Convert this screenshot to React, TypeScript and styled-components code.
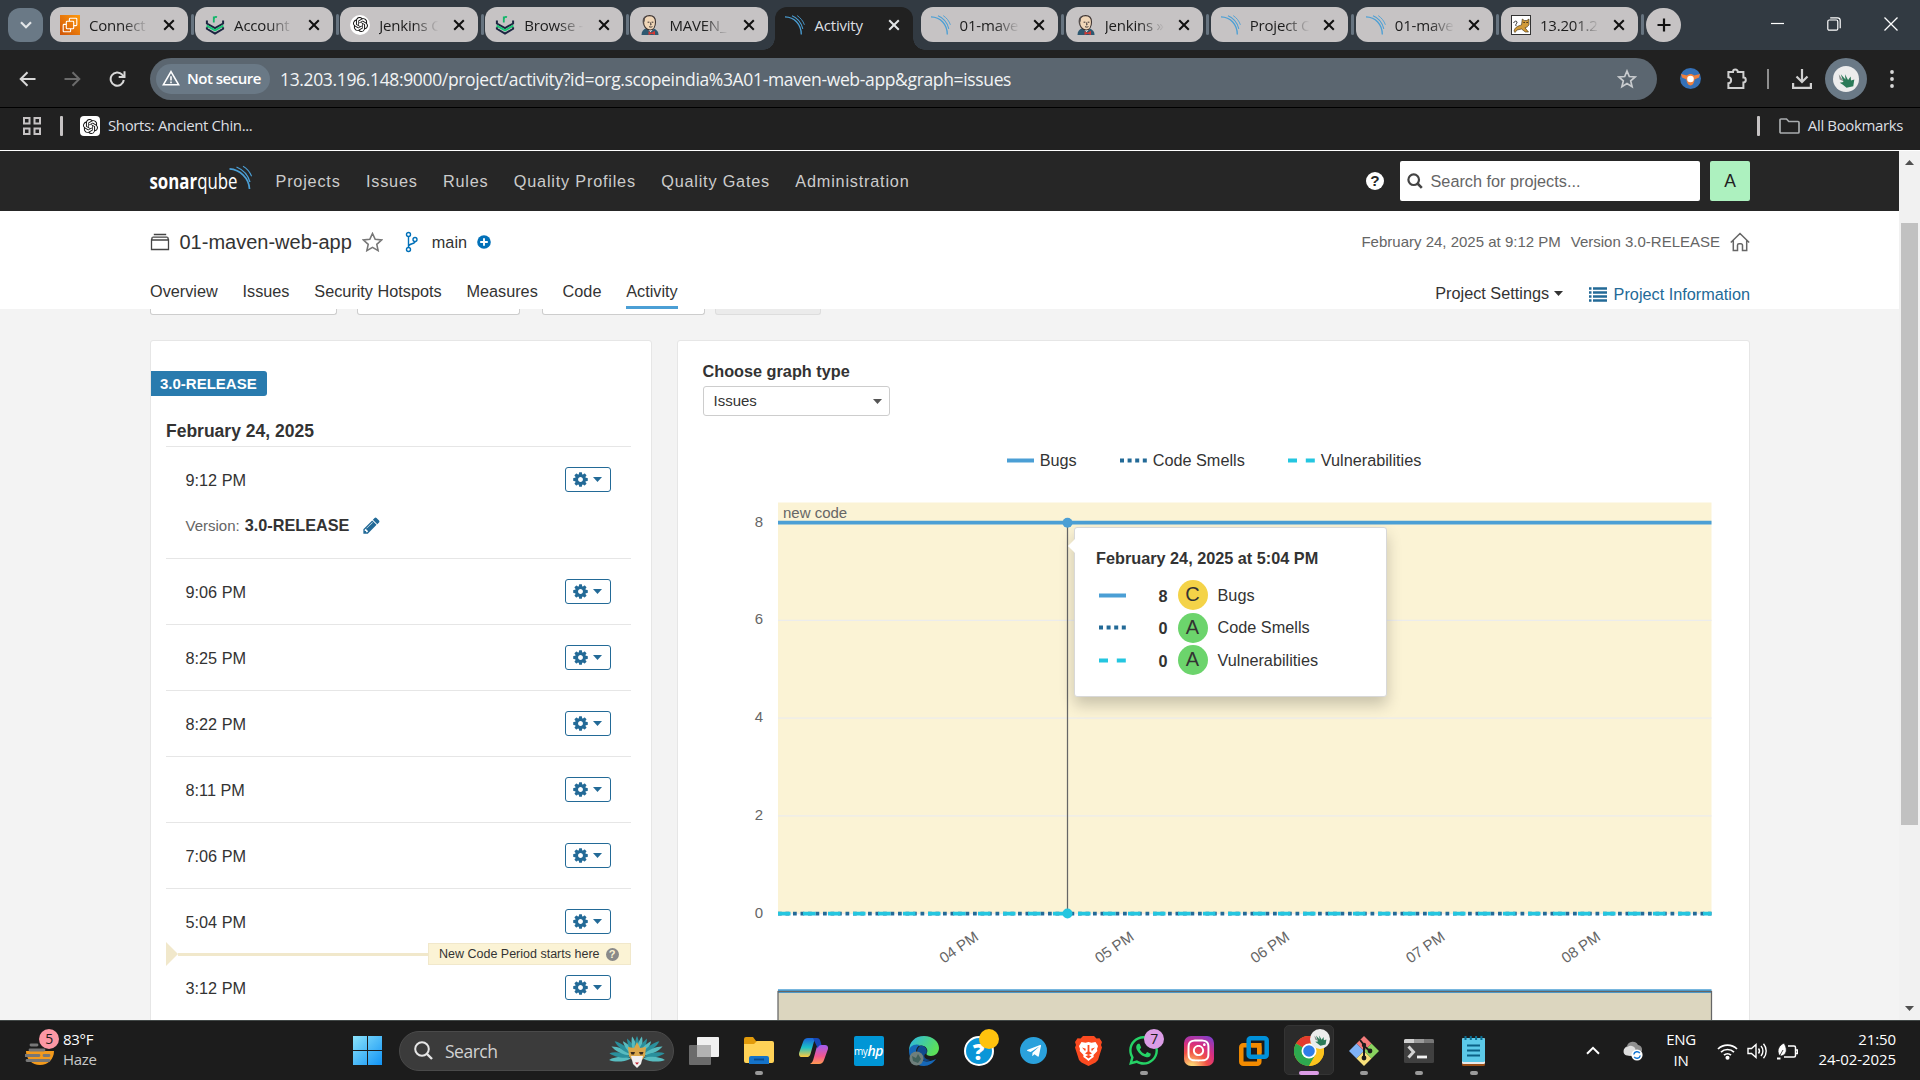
import React from "react";
import styled, { createGlobalStyle, css } from "styled-components";
import { SiOpenai } from "react-icons/si";
import { FaWhatsapp, FaTelegramPlane, FaInstagram } from "react-icons/fa";

const SANS = `"Liberation Sans", Arial, sans-serif`;
const SHELL = `"Open Sans", "Noto Sans", sans-serif`;

const Global = createGlobalStyle`
  html, body { margin: 0; padding: 0; background: #212121; overflow: hidden; }
  * { box-sizing: border-box; }
  svg { display: block; flex: none; }
`;

const Screen = styled.div`
  width: 1920px;
  height: 1080px;
  display: flex;
  flex-direction: column;
  overflow: hidden;
  font-family: ${SANS};
  font-size: 16.25px;
  color: #333;
`;

/* ---------- browser tabs ---------- */

const TabStrip = styled.div`
  height: 50px;
  flex: none;
  background: #323a42;
  display: flex;
  align-items: flex-start;
  padding: 7px 0 0 8px;
  font-family: ${SHELL};
`;
const TabSearch = styled.div`
  width: 35px;
  height: 34px;
  margin: 1px 7px 0 0;
  border-radius: 12px;
  background: #6a7986;
  display: flex;
  align-items: center;
  justify-content: center;
`;
const Slot = styled.div`
  width: 145.1px;
  display: flex;
  flex: none;
`;
const TabBox = styled.div<{ $active?: boolean }>`
  width: 137.5px;
  height: 35px;
  flex: none;
  border-radius: 12px;
  background: #c6c3c4;
  color: #1c1c1c;
  display: flex;
  align-items: center;
  padding: 0 13px 0 10px;
  ${(p) =>
    p.$active &&
    css`
      height: 43px;
      padding-bottom: 8px;
      border-radius: 12px 12px 0 0;
      background: #212121;
      color: #dcdfe2;
      position: relative;
      &::before,
      &::after {
        content: "";
        position: absolute;
        bottom: 0;
        width: 12px;
        height: 12px;
      }
      &::before {
        left: -12px;
        background: radial-gradient(circle at 0 0, transparent 11.5px, #212121 12px);
      }
      &::after {
        right: -12px;
        background: radial-gradient(circle at 100% 0, transparent 11.5px, #212121 12px);
      }
    `}
`;
const TabTitle = styled.div<{ $fade: boolean }>`
  width: 62px;
  margin-left: 9px;
  font-size: 15px;
  line-height: 20px;
  letter-spacing: -0.2px;
  white-space: nowrap;
  ${(p) => p.$fade && css`mask-image: linear-gradient(90deg, #000 55%, transparent 96%);`}
`;
const TabGap = styled.div<{ $line: boolean }>`
  width: 3px;
  height: 21px;
  margin: 7px 0 0 3px;
  border-radius: 2px;
  background: ${(p) => (p.$line ? "#66737f" : "transparent")};
`;
const NewTab = styled.div`
  width: 35px;
  height: 34px;
  margin-top: 1px;
  border-radius: 17px;
  background: #c6c3c4;
  display: flex;
  align-items: center;
  justify-content: center;
`;
const WinButtons = styled.div`
  margin-left: auto;
  width: 149px;
  padding-right: 22px;
  padding-top: 10px;
  display: flex;
  justify-content: space-between;
  align-items: center;
`;
const Spacer = styled.div`
  flex: 1;
`;

const CloseX = ({ color }: { color: string }) => (
  <svg width="12" height="12" viewBox="0 0 12 12">
    <path d="M1.2 1.2l9.6 9.6M10.8 1.2l-9.6 9.6" stroke={color} strokeWidth="2" />
  </svg>
);

const Ec2 = () => (
  <svg width="20" height="20" viewBox="0 0 20 20">
    <defs>
      <linearGradient id="ec2" x1="0" y1="1" x2="1" y2="0">
        <stop offset="0" stopColor="#cf5409" />
        <stop offset="1" stopColor="#ff9a0d" />
      </linearGradient>
    </defs>
    <rect width="20" height="20" fill="url(#ec2)" />
    <g fill="none" stroke="#fff" strokeWidth="1.1">
      <path d="M6.300 9.400H4a.8.8 0 00-.8.8V16a.8.8 0 00.8.8h5.800a.8.8 0 00.8-.8v-2.300" />
      <rect x="6.3" y="6.3" width="7.4" height="7.4" rx=".8" />
      <path d="M9.400 6.300V4a.8.8 0 01.8-.8H16a.8.8 0 01.8.8v5.800a.8.8 0 01-.8.8h-2.300" />
    </g>
  </svg>
);
const Chevrons = () => (
  <svg width="20" height="20" viewBox="0 0 20 20" fill="none">
    <path d="M8.800 7.600V1.600M8.800 3.600c.5-1.500 1.600-2 3.200-1.500" stroke="#12b76a" strokeWidth="1.800" />
    <path d="M1.900 5.500v3L10 13l8.100-4.500v-3" stroke="#1c2540" strokeWidth="2" />
    <path d="M1.600 10.600L10 15.400l8.400-4.800" stroke="#18c676" strokeWidth="1.900" />
    <path d="M1.900 12.200v1.600l8.100 4.900 8.100-4.900v-1.600" stroke="#1c2540" strokeWidth="2" />
  </svg>
);
const GptRound = styled.div<{ $r: number }>`
  width: 20px;
  height: 20px;
  flex: none;
  border-radius: ${(p) => p.$r}px;
  background: #fff;
  color: #111;
  font-size: 15px;
  display: flex;
  align-items: center;
  justify-content: center;
`;
const Jenkins = () => (
  <svg width="20" height="20" viewBox="0 0 20 20">
    <path d="M1.500 20c0-3.500 1.800-6 4.500-6.500h7c3.400.6 5.500 3 5.500 6.500z" fill="#2e5870" />
    <path d="M6.500 13l4 4 3.500-3.500V12z" fill="#fff" />
    <path d="M3.500 7C3.500 2.500 6 .6 9.600.6c4 0 5.900 2.600 5.900 6.400 0 4.500-2 8-5.400 8C6.300 15 3.500 11.500 3.500 7z" fill="#f0d6b7" stroke="#3b3231" strokeWidth="1.100" />
    <path d="M3.100 9.500C2 5 3 2 6.300.8c-.8 1.500-1.800 2.500-1.600 5.200z" fill="#57504f" />
    <path d="M7.600 7.200h1.800M11.600 7.200h1.800M9 11.600c1.200.7 2.400.6 3.400 0M10.500 7.500l.6 2.300h-1" stroke="#3b3231" strokeWidth="1" fill="none" />
    <path d="M8.500 16.300l3.200 1.400 3.300-1.900v4.200l-3.300-1.200-3.200 1.200z" fill="#d33833" />
  </svg>
);
const Waves = () => (
  <svg width="20" height="20" viewBox="0 0 20 20" fill="none" stroke="#4b9fd5">
    <path d="M0 1.800C9.500 2 16.300 9.500 16.300 19.500" strokeWidth="1.300" />
    <path d="M7 .8c5 2 9.300 7 10.800 13" strokeWidth="1.100" />
    <path d="M12.200.6c3.300 2.200 5.900 5.400 7.200 9.200" strokeWidth=".9" />
  </svg>
);
const Tomcat = () => (
  <svg width="20" height="20" viewBox="0 0 20 20">
    <rect x=".5" y=".5" width="19" height="19" fill="#fff" stroke="#333" />
    <path d="M2.500 8c1-2 3-2.500 3.500-1s-2 2-1 4" fill="none" stroke="#222" strokeWidth=".9" />
    <path d="M3 16c1-4 4-5 7.500-6l.8-6 2 1.500h2.500L18 4v5.500c-.8 2.200-2.300 2.800-4 3.300l3.500 4.200h-3.200L10.500 14 6 15l-2 2.500z" fill="#d19a38" stroke="#3a2c10" strokeWidth=".6" />
    <path d="M12.500 7.500h1.200M15.500 7.500h1.200" stroke="#111" strokeWidth="1" />
  </svg>
);

type Fav = "ec2" | "chev" | "gpt" | "jenkins" | "sonar" | "tomcat";
const Favicon = ({ kind }: { kind: Fav }) => {
  switch (kind) {
    case "ec2":
      return <Ec2 />;
    case "chev":
      return <Chevrons />;
    case "gpt":
      return (
        <GptRound $r={10}>
          <SiOpenai />
        </GptRound>
      );
    case "jenkins":
      return <Jenkins />;
    case "sonar":
      return <Waves />;
    default:
      return <Tomcat />;
  }
};

const tabs: { icon: Fav; title: string; fade?: boolean; active?: boolean; line?: boolean }[] = [
  { icon: "ec2", title: "Connect", fade: true, line: true },
  { icon: "chev", title: "Account", fade: true, line: true },
  { icon: "gpt", title: "Jenkins C", fade: true, line: true },
  { icon: "chev", title: "Browse -", fade: true, line: true },
  { icon: "jenkins", title: "MAVEN_", fade: true },
  { icon: "sonar", title: "Activity", active: true },
  { icon: "sonar", title: "01-mave", fade: true, line: true },
  { icon: "jenkins", title: "Jenkins »", fade: true, line: true },
  { icon: "sonar", title: "Project C", fade: true, line: true },
  { icon: "sonar", title: "01-mave", fade: true, line: true },
  { icon: "tomcat", title: "13.201.2", fade: true, line: true },
];

/* ---------- address bar ---------- */

const Toolbar = styled.div`
  height: 58px;
  flex: none;
  background: #212121;
  border-bottom: 1px solid #000;
  display: flex;
  align-items: center;
  padding-left: 18px;
  font-family: ${SHELL};
`;
const NavIcons = styled.div`
  width: 132px;
  display: flex;
  gap: 26px;
`;
const Omnibox = styled.div`
  width: 1507px;
  height: 42px;
  border-radius: 21px;
  background: #5b6670;
  display: flex;
  align-items: center;
  padding: 0 20px 0 6px;
`;
const Chip = styled.div`
  width: 114px;
  height: 30px;
  border-radius: 15px;
  background: #6a7986;
  color: #fff;
  display: flex;
  align-items: center;
  gap: 7px;
  padding: 0 0 1px 6px;
  font-size: 15px;
  font-weight: 600;
  letter-spacing: -0.5px;
  white-space: nowrap;
`;
const Url = styled.div`
  margin-left: 10px;
  flex: 1;
  color: #f1f3f4;
  font-size: 17.5px;
  letter-spacing: -0.35px;
  white-space: nowrap;
`;
const Tools = styled.div`
  flex: 1;
  display: flex;
  align-items: center;
  padding-left: 23px;
`;
const Puzzle = styled.div`
  margin-left: 24px;
`;
const ToolLine = styled.div`
  width: 2px;
  height: 20px;
  margin: 0 23px 0 20px;
  background: #8f8f8f;
`;
const Ring = styled.div`
  width: 42px;
  height: 42px;
  margin: 0 23px 0 13px;
  border-radius: 50%;
  background: #6a7986;
  display: flex;
  align-items: center;
  justify-content: center;
`;
const Leaf = ({ size }: { size: number }) => (
  <svg width={size} height={size} viewBox="0 0 25 25">
    <circle cx="12.500" cy="12.500" r="12.500" fill="#ececec" />
    <path d="M7.500 8l4.500 5-.5-5 3 5.500L17 10l.3 4 3.200-1-1 6.500-6.500 1.500-3.500-3-3-2 3.500-.5z" fill="#2b7a58" />
    <path d="M5.500 8l5 7-4-2z" fill="#8a8f8c" />
  </svg>
);

const BookmarkBar = styled.div`
  height: 42px;
  flex: none;
  background: #212121;
  display: flex;
  align-items: center;
  padding: 0 17px 6px 23px;
  color: #dcdfe2;
  font-family: ${SHELL};
  font-size: 15px;
  letter-spacing: -0.37px;
  white-space: nowrap;
`;
const BarLine = styled.div<{ $l: number; $r: number }>`
  width: 3px;
  height: 20px;
  margin-left: ${(p) => p.$l}px;
  margin-right: ${(p) => p.$r}px;
  border-radius: 1px;
  background: #c6c3c4;
`;
const BmText = styled.span`
  margin-left: 8px;
  padding-bottom: 2px;
`;

/* ---------- page ---------- */

const PageRow = styled.div`
  height: 870px;
  flex: none;
  display: flex;
  border-top: 1px solid #fff;
`;
const Page = styled.div`
  width: 1899px;
  background: #f3f3f3;
  overflow: hidden;
`;
const Scroll = styled.div`
  flex: 1;
  background: #f1f1f1;
  display: flex;
  flex-direction: column;
  align-items: center;
  justify-content: space-between;
  padding: 9px 0 9px;
`;
const Thumb = styled.div`
  width: 17px;
  height: 602px;
  background: #c1c1c1;
  margin-bottom: 123px;
`;

const SonarNav = styled.div`
  height: 60px;
  background: #262626;
  display: flex;
  align-items: center;
  padding: 0 149px 0 149px;
`;
const LogoBox = styled.div`
  width: 126.5px;
  padding-bottom: 2px;
`;
const NavLinks = styled.div`
  display: flex;
  gap: 25.3px;
  color: #ccc;
  font-size: 16.25px;
  letter-spacing: 0.8px;
  padding-top: 1px;
  white-space: nowrap;
`;
const SearchBox = styled.div`
  width: 300px;
  height: 40px;
  margin: 0 10px 0 16px;
  background: #fff;
  border-radius: 2px;
  display: flex;
  align-items: center;
  gap: 7.5px;
  padding-left: 7px;
  color: #656565;
`;
const Avatar = styled.div`
  width: 40px;
  height: 40px;
  border-radius: 2px;
  background: #adf1bf;
  color: #222;
  display: flex;
  align-items: center;
  justify-content: center;
  font-size: 17.5px;
`;

const ProjectHead = styled.div`
  height: 98px;
  background: #fff;
  padding: 0 149px 0 150px;
  display: flex;
  flex-direction: column;
`;
const TitleRow = styled.div`
  height: 62px;
  display: flex;
  align-items: center;
`;
const ProjectName = styled.div`
  font-size: 20px;
  margin: 0 10px 0 9.5px;
`;
const Branch = styled.div`
  margin: 0 -1px 0 12px;
`;
const Meta = styled.div`
  margin-left: auto;
  display: flex;
  align-items: center;
  gap: 10px;
  color: #656565;
  font-size: 15px;
  span {
    padding-bottom: 1px;
  }
`;
const TabsRow = styled.div`
  height: 36px;
  display: flex;
`;
const PageTab = styled.div<{ $active?: boolean }>`
  height: 36px;
  line-height: 36px;
  margin-right: 24.8px;
  border-bottom: ${(p) => (p.$active ? "3px solid #4b9fd5" : "0")};
`;
const TabActions = styled.div`
  margin-left: auto;
  display: flex;
  align-items: center;
  height: 40px;
`;
const InfoLink = styled.div`
  color: #236a97;
  display: flex;
  align-items: center;
  gap: 7px;
  margin-left: 26px;
  padding-top: 2px;
`;
const Caret = ({ color }: { color: string }) => (
  <svg width="9" height="5" viewBox="0 0 9 5">
    <path d="M0 0h9L4.500 5z" fill={color} />
  </svg>
);

const Filters = styled.div`
  height: 31px;
  display: flex;
  padding-left: 150px;
`;
const FilterStub = styled.div<{ $w: number; $gap: number; $off?: boolean }>`
  width: ${(p) => p.$w}px;
  height: 6px;
  margin-right: ${(p) => p.$gap}px;
  background: ${(p) => (p.$off ? "#ebebeb" : "#fff")};
  border: 1px solid ${(p) => (p.$off ? "#ddd" : "#cdcdcd")};
  border-top: 0;
  border-radius: 0 0 3px 3px;
`;

const Columns = styled.div`
  display: flex;
  gap: 25px;
  padding-left: 150px;
`;
const Panel = styled.div<{ $w: number }>`
  width: ${(p) => p.$w}px;
  height: 700px;
  background: #fff;
  border: 1px solid #e6e6e6;
  border-radius: 3px;
  position: relative;
`;
const VersionBadge = styled.div`
  width: 116px;
  height: 25px;
  margin-top: 30px;
  background: #297bae;
  color: #fff;
  border-radius: 0 3px 3px 0;
  font-size: 15px;
  font-weight: bold;
  line-height: 25px;
  padding-left: 9px;
`;
const List = styled.div`
  width: 465px;
  margin-left: 15px;
`;
const DayTitle = styled.div`
  height: 51px;
  padding-top: 24px;
  border-bottom: 1px solid #e6e6e6;
  font-size: 17.5px;
  font-weight: bold;
  line-height: 22px;
`;
const Analysis = styled.div<{ $h?: number; $plain?: boolean }>`
  height: ${(p) => p.$h ?? 66}px;
  border-bottom: 1px solid ${(p) => (p.$plain ? "transparent" : "#e6e6e6")};
  padding: 20px 20px 0 19.5px;
`;
const TimeRow = styled.div`
  height: 25px;
  display: flex;
  justify-content: space-between;
  align-items: center;
  span {
    padding-top: 2px;
  }
`;
const GearButton = styled.div`
  width: 46px;
  height: 25px;
  border: 1px solid #236a97;
  border-radius: 3px;
  display: flex;
  align-items: center;
  gap: 4px;
  padding-left: 6px;
`;
const VersionRow = styled.div`
  display: flex;
  align-items: center;
  margin-top: 23px;
  height: 20px;
  font-size: 15px;
  color: #656565;
  b {
    font-size: 16.25px;
    color: #333;
    margin: 0 13px 0 5px;
  }
`;
const PeriodMark = styled.div`
  display: flex;
  align-items: center;
  height: 24px;
  margin: -13px 0 -11px;
`;
const PeriodArrow = styled.div`
  border: 12px solid transparent;
  border-left-color: #f1e8cb;
  border-right: 0;
`;
const PeriodLine = styled.div`
  flex: 1;
  height: 3px;
  background: #f1e8cb;
`;
const PeriodLabel = styled.div`
  width: 203px;
  height: 22px;
  border: 1px solid #f1e8cb;
  background: #fbf3d5;
  font-size: 12.5px;
  display: flex;
  align-items: center;
  gap: 6px;
  padding-left: 10px;
`;

const GraphHead = styled.div`
  padding: 20px 0 0 24.5px;
  height: 98px;
`;
const GraphLabel = styled.div`
  font-weight: bold;
  line-height: 20px;
  height: 25px;
`;
const GraphSelect = styled.div`
  width: 187px;
  height: 30px;
  border: 1px solid #cdcdcd;
  border-radius: 3px;
  display: flex;
  align-items: center;
  justify-content: space-between;
  padding: 0 7px 0 10px;
  font-size: 15px;
  span {
    padding-bottom: 2px;
  }
`;
const Legend = styled.div`
  height: 42px;
  margin-bottom: -1px;
  display: flex;
  align-items: center;
  justify-content: center;
  gap: 43px;
  padding-left: 1px;
`;
const LegendItem = styled.div`
  display: flex;
  align-items: center;
  gap: 6px;
`;

const Tip = styled.div`
  position: absolute;
  left: 396px;
  top: 186px;
  width: 313px;
  height: 170px;
  background: #fff;
  border: 1px solid #d8d8d8;
  border-radius: 3px;
  box-shadow: 0 8px 15px rgba(0, 0, 0, 0.2);
  padding: 19px 20px 0 21px;
  &::before {
    content: "";
    position: absolute;
    left: -7px;
    top: 11px;
    border: 7px solid transparent;
    border-left: 0;
    border-right-color: #fff;
  }
`;
const TipTitle = styled.div`
  font-weight: bold;
  line-height: 22px;
  margin-bottom: 10px;
  white-space: nowrap;
`;
const TipRow = styled.div`
  display: grid;
  grid-template-columns: 30px 38.5px 42px 1fr;
  align-items: center;
  height: 32.5px;
  padding-left: 3px;
  b {
    text-align: right;
    padding-top: 2px;
  }
`;
const Rating = styled.div<{ $c: string }>`
  width: 30px;
  height: 30px;
  margin-left: 10px;
  border-radius: 50%;
  background: ${(p) => p.$c};
  font-size: 20px;
  line-height: 29px;
  text-align: center;
`;
const TipName = styled.span`
  padding-left: 8px;
`;

type Series = "bugs" | "smells" | "vulns";
const SeriesLine = ({ kind }: { kind: Series }) => (
  <svg width="27" height="5" viewBox="0 0 27 5">
    <path
      d="M0 2.500H27"
      strokeWidth="4"
      stroke={kind === "bugs" ? "#4b9fd5" : kind === "smells" ? "#236a97" : "#24c6e0"}
      strokeDasharray={kind === "bugs" ? undefined : kind === "smells" ? "4 3.600" : "9 8.800"}
    />
  </svg>
);

const Cog = () => (
  <svg width="17" height="17" viewBox="0 0 1792 1792" fill="#236a97">
    <path d="M1152 896q0-106-75-181t-181-75-181 75-75 181 75 181 181 75 181-75 75-181zm512-109v222q0 12-8 23t-20 13l-185 28q-19 54-39 91 35 50 107 138 10 12 10 25t-9 23q-27 37-99 108t-94 71q-12 0-26-9l-138-108q-44 23-91 38-16 136-29 186-7 28-36 28h-222q-14 0-24.500-8.500t-11.500-21.500l-28-184q-49-16-90-37l-141 107q-10 9-25 9-14 0-25-11-126-114-165-168-7-10-7-23 0-12 8-23 15-21 51-66.500t54-70.500q-27-50-41-99l-183-27q-13-2-21-12.500t-8-23.500v-222q0-12 8-23t19-13l186-28q14-46 39-92-40-57-107-138-10-12-10-24 0-10 9-23 26-36 98.500-107.500t94.500-71.500q13 0 26 10l138 107q44-23 91-38 16-136 29-186 7-28 36-28h222q14 0 24.500 8.500t11.500 21.500l28 184q49 16 90 37l142-107q9-9 24-9 13 0 25 10 129 119 165 170 7 8 7 22 0 12-8 23-15 21-51 66.500t-54 70.500q26 50 41 98l183 28q13 2 21 12.500t8 23.500z" />
  </svg>
);
const Gear = () => (
  <GearButton>
    <Cog />
    <Caret color="#236a97" />
  </GearButton>
);
const Pencil = () => (
  <svg width="19" height="19" viewBox="0 0 1792 1792" fill="#236a97">
    <path d="M491 1536l91-91-235-235-91 91v107h128v128h107zm523-928q0-22-22-22-10 0-17 7l-542 542q-7 7-7 17 0 22 22 22 10 0 17-7l542-542q7-7 7-17zm-54-192l416 416-832 832h-416v-416zm683 96q0 53-37 90l-166 166-416-416 166-165q36-38 90-38 53 0 91 38l235 234q37 39 37 91z" />
  </svg>
);
const HelpDot = styled.div<{ $s: number; $bg: string; $fg: string }>`
  width: ${(p) => p.$s}px;
  height: ${(p) => p.$s}px;
  flex: none;
  border-radius: 50%;
  background: ${(p) => p.$bg};
  color: ${(p) => p.$fg};
  font-weight: bold;
  font-size: ${(p) => p.$s * 0.85}px;
  line-height: ${(p) => p.$s}px;
  text-align: center;
`;

const SonarLogo = () => (
  <svg width="106" height="30" viewBox="0 0 106 30">
    <text x="0.500" y="24" fontFamily='"Open Sans", sans-serif' fontSize="21.500" fill="#fff" textLength="88" lengthAdjust="spacingAndGlyphs">
      <tspan fontWeight="700">sonar</tspan>
      <tspan fontWeight="400">qube</tspan>
    </text>
    <g fill="none" stroke="#4b9fd5">
      <path d="M80.500 3.800C91 4.500 100 13 100.500 24" strokeWidth="1.700" />
      <path d="M87.500 2c6 2.500 11.500 8 13.500 15" strokeWidth="1.300" />
      <path d="M94 1.300c3.800 2.200 7 6 8.600 10" strokeWidth="1.100" />
    </g>
  </svg>
);

/* plot area inside the graph panel */
const X0 = 100;
const X1 = 1033.5;
const yOf = (v: number) => 433.5 - v * 48.85;

const Chart = () => (
  <svg width="1071" height="540" viewBox="0 0 1071 540" fontFamily={SANS} fontSize="15" fill="#666">
    <rect x={X0} y="22.500" width={X1 - X0} height="411" fill="#fbf3d5" />
    {[0, 2, 4, 6, 8].map((v) => (
      <g key={v}>
        <path d={`M${X0} ${yOf(v)}H${X1}`} stroke="#ececec" strokeWidth="1.250" />
        <text x="85" y={yOf(v) + 4} textAnchor="end">
          {v}
        </text>
      </g>
    ))}
    <text x={X0 + 5} y="38">
      new code
    </text>
    <path d={`M${X0} ${yOf(8)}H${X1}`} stroke="#4b9fd5" strokeWidth="3.750" />
    <path d={`M${X0} ${yOf(0)}H${X1}`} stroke="#236a97" strokeWidth="3.750" strokeDasharray="3.750 3.750" />
    <path d={`M${X0} ${yOf(0)}H${X1}`} stroke="#24c6e0" strokeWidth="3.750" strokeDasharray="12.500 12.500" />
    <path d={`M389.500 ${yOf(8)}V${yOf(0)}`} stroke="#666" strokeWidth="1.250" />
    <circle cx="389.500" cy={yOf(8)} r="5" fill="#4b9fd5" />
    <circle cx="389.500" cy={yOf(0)} r="5" fill="#24c6e0" />
    {["04 PM", "05 PM", "06 PM", "07 PM", "08 PM"].map((t, i) => {
      const x = 301.5 + i * 155.5;
      return (
        <text key={t} x={x} y="459" textAnchor="end" transform={`rotate(-35 ${x} 459)`}>
          {t}
        </text>
      );
    })}
    <rect x={X0} y="511" width={X1 - X0} height="60" fill="#dcd6bf" />
    <path d={`M${X0} 511H${X1}`} stroke="#4b9fd5" strokeWidth="3.750" />
    <rect x={X0} y="511.500" width={X1 - X0} height="60" fill="none" stroke="#666" strokeWidth="1.250" />
  </svg>
);

/* ---------- taskbar ---------- */

const Taskbar = styled.div`
  height: 60px;
  flex: none;
  background: #1c1c1c;
  border-top: 1px solid #414746;
  display: flex;
  align-items: center;
  color: #fff;
  font-family: ${SHELL};
  font-size: 15px;
  letter-spacing: -0.3px;
  white-space: nowrap;
`;
const Weather = styled.div`
  width: 353px;
  padding: 0 0 4px 25px;
  display: flex;
  align-items: center;
  gap: 8px;
  line-height: 20px;
`;
const WeatherSub = styled.div`
  color: #c8c8c8;
`;
const Pill = styled.div`
  width: 275px;
  height: 40px;
  margin: 0 2px 0 17px;
  border-radius: 20px;
  background: #3b3b3b;
  border: 1px solid #4a4a4a;
  display: flex;
  align-items: center;
  padding: 0 6px 0 14px;
  gap: 12px;
  font-size: 17.5px;
  letter-spacing: -0.5px;
  color: #d2d2d2;
`;
const AppSlot = styled.div<{ $on?: boolean }>`
  width: 55px;
  height: 59px;
  display: flex;
  align-items: center;
  justify-content: center;
  position: relative;
  &::before {
    content: "";
    display: ${(p) => (p.$on ? "block" : "none")};
    position: absolute;
    inset: 4px 2.5px 5px;
    border-radius: 5px;
    background: #2b2b2b;
    border: 1px solid #343434;
  }
  svg {
    position: relative;
  }
`;
const Running = styled.span<{ $wide?: boolean }>`
  position: absolute;
  bottom: 5px;
  left: ${(p) => (p.$wide ? 17.5 : 23.5)}px;
  width: ${(p) => (p.$wide ? 20 : 8)}px;
  height: 4px;
  border-radius: 2px;
  background: ${(p) => (p.$wide ? "#dc9de6" : "#9a9a9a")};
`;
const Count = styled.span<{ $c: string; $l: number; $t: number }>`
  position: absolute;
  left: ${(p) => p.$l}px;
  top: ${(p) => p.$t}px;
  width: 20px;
  height: 20px;
  border-radius: 50%;
  background: ${(p) => p.$c};
  color: #1c1c1c;
  font-size: 14px;
  line-height: 19px;
  text-align: center;
`;
const WeatherIcon = styled.div`
  position: relative;
  width: 30px;
  height: 36px;
`;
const Tray = styled.div`
  margin-left: auto;
  display: flex;
  align-items: center;
  padding-right: 24px;
  line-height: 20px;
`;
const Lang = styled.div`
  width: 34px;
  margin: 0 19px 0 21px;
  text-align: center;
  line-height: 21px;
  padding-bottom: 1px;
`;
const Clock = styled.div`
  width: 98px;
  text-align: right;
  letter-spacing: -0.08px;
  padding-bottom: 4px;
`;
const TrayIcons = styled.div`
  display: flex;
  gap: 9px;
`;
const HpBox = styled.div`
  width: 30px;
  height: 30px;
  background: #0096d6;
  border-radius: 2px;
  display: flex;
  align-items: center;
  justify-content: center;
  font-size: 10px;
  letter-spacing: -0.5px;
  i {
    font-size: 14px;
    font-weight: 600;
  }
`;
const Round = styled.div<{ $bg: string; $s: number; $r: string; $f: number }>`
  width: ${(p) => p.$s}px;
  height: ${(p) => p.$s}px;
  border-radius: ${(p) => p.$r};
  background: ${(p) => p.$bg};
  font-size: ${(p) => p.$f}px;
  display: flex;
  align-items: center;
  justify-content: center;
`;
const BadgeLeaf = styled.div`
  position: absolute;
  left: 29px;
  top: 8px;
`;

const Mask = () => (
  <svg width="60" height="34" viewBox="0 0 60 34">
    {[-94, -80, -66, -53, -40, -27, -13, 0, 13, 27, 40, 53, 66, 80, 94].map((a, i) => (
      <path
        key={a}
        d="M30 22C26.500 14 27.500 5 30 0c2.500 5 3.500 14 0 22z"
        fill={i % 2 ? "#2a8f9c" : "#58bcc0"}
        transform={`translate(0 2) rotate(${a} 30 22) ${Math.abs(a) > 45 ? "translate(0 -6)" : ""}`}
      />
    ))}
    <path d="M21 13l6 1 3-6 3 6 6-1-1 9-3 4H25l-3-4z" fill="#d9a64a" />
    <path d="M24 22h12l-2 8-4 4-4-4z" fill="#f1efef" />
    <path d="M23.500 18h4.500l-1 2.500h-2.500zM36.500 18H32l1 2.500h2.500z" fill="#3a2b1c" />
    <path d="M28 28.500h4l-2 2.200z" fill="#c01f2d" />
  </svg>
);

const Icons = {
  task: (
    <svg width="30" height="28" viewBox="0 0 30 28">
      <rect x="8" y="0" width="22" height="20" rx="1" fill="#f0f0f0" />
      <rect x="0" y="8" width="22" height="20" rx="1" fill="#6b6b6b" />
      <path d="M8 8h14v12H8z" fill="#b2b2b2" />
    </svg>
  ),
  folder: (
    <svg width="30" height="27" viewBox="0 0 30 27">
      <path d="M0 2a2 2 0 012-2h7l3 4h16v4H0z" fill="#e19a0b" />
      <path d="M0 7h10l3-3h15a2 2 0 012 2v18a2 2 0 01-2 2H2a2 2 0 01-2-2z" fill="#ffd257" />
      <path d="M5 27v-6a2 2 0 012-2h16a2 2 0 012 2v6z" fill="#1573c9" />
      <path d="M10 22.500h10" stroke="#0b4a8c" strokeWidth="1.800" />
    </svg>
  ),
  copilot: (
    <svg width="29" height="26" viewBox="0 0 29 26">
      <defs>
        <linearGradient id="cpa" x1="0" y1="0" x2="0" y2="1">
          <stop offset="0" stopColor="#1b62d8" />
          <stop offset=".5" stopColor="#1cc0c8" />
          <stop offset="1" stopColor="#ffc93c" />
        </linearGradient>
        <linearGradient id="cpb" x1="0" y1="0" x2="0" y2="1">
          <stop offset="0" stopColor="#a25cf0" />
          <stop offset=".6" stopColor="#f2588f" />
          <stop offset="1" stopColor="#ff9b52" />
        </linearGradient>
      </defs>
      <path d="M9 0h9c-2 1-3 3-4 7l-2.500 9c-.8 2.500-2 3-4 3H3c-2.500 0-3.500-2-2.800-4.500L4 4C4.800 1.500 6.500 0 9 0z" fill="url(#cpa)" />
      <path d="M20 26h-9c2-1 3-3 4-7l2.500-9c.8-2.500 2-3 4-3H26c2.500 0 3.500 2 2.800 4.500L25 22c-.8 2.500-2.500 4-5 4z" fill="url(#cpb)" />
      <path d="M14 0h4c2 0 3 1.500 3.500 3.500L22.500 7c-2 0-3 1-3.800 3.200z" fill="#1747b5" />
    </svg>
  ),
  edge: (
    <svg width="30" height="30" viewBox="0 0 30 30">
      <defs>
        <linearGradient id="eda" x1="0" y1="0" x2="1" y2=".4">
          <stop offset="0" stopColor="#2ab5ea" />
          <stop offset="1" stopColor="#5be05a" />
        </linearGradient>
      </defs>
      <path d="M0 15C0 6 6 0 15 0s15 6 15 12c0 5-4 8-8 8-3 0-5-1-4.500-2.500C20 14 17 9.500 12 9.500 6 9.500 1 13 0 17z" fill="url(#eda)" />
      <path d="M0 15c0-4 5-8 11-6-4 2-5 7-3 11 3 6 11 7 19 3-3 4-7 7-12 7C6 30 0 23 0 15z" fill="#1668b8" />
      <path d="M12 9.500c4 0 7 4 5.500 8-3 0-4 6 4 6.500-8 3-14-2-13.500-8 .2-3 1.500-5.500 4-6.500z" fill="#104a8e" />
      <circle cx="7.500" cy="22.500" r="7" fill="#6f7f7c" />
      <path d="M3 20l4 2 2-4 3 5-3 4-5-2z" fill="#41605a" />
    </svg>
  ),
  brave: (
    <svg width="27" height="30" viewBox="0 0 27 30">
      <path d="M8 0h11l2.500 2.500 3-.3L27 6l-1 3 1 2.500-4 12.500-2.500 2.500L13.500 30l-7-3.500L4 24 0 11.500 1 9 0 6l2.500-3.800 3 .3z" fill="#fb4a20" />
      <path d="M6.500 6l4 .8 3-.8 3 .8 4-.8 2.500 4-1 3 .3 2-3.800 4 .2 2-2.200 1.500L13.500 25l-3-2.500L8.300 21l.2-2-3.800-4 .3-2-1-3z" fill="#fff" />
      <path d="M7 11.500l3.800 1.200-.6 2.600zM20 11.500l-3.800 1.200.6 2.600zM12.600 9h1.800v6.500l2.600 2-3.500 1.600-3.500-1.600 2.600-2zM10.500 20.300l3-1.300 3 1.300-3 2.200z" fill="#fb4a20" />
    </svg>
  ),
  chrome: (
    <svg width="30" height="30" viewBox="0 0 30 30">
      <circle cx="15" cy="15" r="15" fill="#fbbc05" />
      <path d="M15 15L2 7.500A15 15 0 0128 7.500H15z" fill="#e33b2e" />
      <path d="M2 7.500A15 15 0 0015 30l6.500-11.200L15 15z" fill="#2da94f" />
      <path d="M15 7.500h13A15 15 0 0115 30l6.500-11.200z" fill="#fcc31e" />
      <circle cx="15" cy="15" r="7.500" fill="#fff" />
      <circle cx="15" cy="15" r="5.800" fill="#2f7de9" />
    </svg>
  ),
  vmware: (
    <svg width="30" height="30" viewBox="0 0 30 30" fill="none" strokeWidth="4.500">
      <rect x="2.300" y="9.300" width="18" height="18.400" rx="2" stroke="#f38b00" />
      <rect x="9.700" y="2.300" width="18" height="18.400" rx="2" stroke="#0091da" />
      <path d="M12.500 9.300h7.800v8" stroke="#f38b00" />
    </svg>
  ),
  git: (
    <svg width="30" height="30" viewBox="0 0 30 30">
      <path d="M15 0l7.500 7.500L15 15 7.500 7.500z" fill="#f37b7b" />
      <path d="M7.500 7.500L15 15l-7.500 7.500L0 15z" fill="#7fb2f5" />
      <path d="M22.500 7.500L30 15l-7.500 7.500L15 15z" fill="#8ad35f" />
      <path d="M15 15l7.500 7.500L15 30l-7.500-7.500z" fill="#f8e07b" />
      <path d="M11 4l4 5v13M15 10l6 5" stroke="#1c1c1c" strokeWidth="2" fill="none" />
      <circle cx="15" cy="9" r="2.200" fill="#1c1c1c" />
      <circle cx="15" cy="22" r="2.400" fill="#1c1c1c" />
      <circle cx="21" cy="15" r="2.400" fill="#1c1c1c" />
    </svg>
  ),
  terminal: (
    <svg width="30" height="24" viewBox="0 0 30 24">
      <rect width="30" height="24" rx="1.500" fill="#404040" />
      <path d="M0 1.500A1.500 1.500 0 011.500 0H10v4H0z" fill="#d0d0d0" />
      <path d="M10 0h10v4H10z" fill="#9a9a9a" />
      <path d="M20 0h8.500A1.500 1.500 0 0130 1.500V4H20z" fill="#777" />
      <path d="M4.500 7.500l5 5.500-5 5.500" fill="none" stroke="#d2d2d2" strokeWidth="3" />
      <path d="M13 18h10" stroke="#f4f4f4" strokeWidth="2.800" />
    </svg>
  ),
  notepad: (
    <svg width="23" height="30" viewBox="0 0 23 30">
      <rect y="2" width="23" height="28" rx="1.500" fill="#9b4f17" />
      <rect y="2" width="23" height="26" rx="1.500" fill="#e9e9e9" />
      <rect y="2" width="23" height="24" rx="1.500" fill="#5cc9e8" />
      <path d="M3.500 0v4M8.800 0v4M14.100 0v4M19.400 0v4" stroke="#0b6f93" strokeWidth="2" />
      <path d="M5 9.500h13M5 14.500h13M5 19.500h13" stroke="#0b6186" strokeWidth="1.900" />
    </svg>
  ),
};

const HelpBig = styled.div`
  width: 30px;
  height: 30px;
  border-radius: 50%;
  background: #0a96d8;
  border: 2px solid #fff;
  font-weight: 800;
  font-size: 23px;
  line-height: 26px;
  text-align: center;
`;
const WaWrap = styled.div`
  color: #25d366;
  font-size: 33px;
`;

const times = ["9:06 PM", "8:25 PM", "8:22 PM", "8:11 PM", "7:06 PM", "5:04 PM"];

export default function App() {
  return (
    <Screen>
      <Global />
      <TabStrip>
        <TabSearch>
          <svg width="12" height="8" viewBox="0 0 12 8">
            <path d="M1 1.200l5 5 5-5" fill="none" stroke="#e3e6e8" strokeWidth="2.200" />
          </svg>
        </TabSearch>
        {tabs.map((t, i) => (
          <Slot key={i}>
            <TabBox $active={t.active}>
              <Favicon kind={t.icon} />
              <TabTitle $fade={!!t.fade}>{t.title}</TabTitle>
              <Spacer />
              <CloseX color={t.active ? "#e3e6e8" : "#111"} />
            </TabBox>
            <TabGap $line={!!t.line} />
          </Slot>
        ))}
        <NewTab>
          <svg width="14" height="14" viewBox="0 0 14 14">
            <path d="M7 .5v13M.5 7h13" stroke="#111" strokeWidth="2.200" />
          </svg>
        </NewTab>
        <WinButtons>
          <svg width="13" height="14" viewBox="0 0 13 14">
            <path d="M0 6.500h13" stroke="#fff" strokeWidth="1.200" />
          </svg>
          <svg width="14" height="14" viewBox="0 0 14 14" fill="none" stroke="#fff" strokeWidth="1.200">
            <rect x=".8" y="3" width="10" height="10.200" rx="1.500" />
            <path d="M3.200.8h7.300a2.700 2.700 0 012.700 2.700v7.800" />
          </svg>
          <svg width="14" height="14" viewBox="0 0 14 14">
            <path d="M.5.5l13 13M13.500.5l-13 13" stroke="#fff" strokeWidth="1.300" />
          </svg>
        </WinButtons>
      </TabStrip>

      <Toolbar>
        <NavIcons>
          <svg width="19" height="16" viewBox="0 0 19 16" fill="none" stroke="#d8d8d8" strokeWidth="2">
            <path d="M17.500 8H3M9.500 1.200L2.700 8l6.800 6.800" />
          </svg>
          <svg width="19" height="16" viewBox="0 0 19 16" fill="none" stroke="#6b6b6b" strokeWidth="2">
            <path d="M1.500 8H16M9.500 1.200L16.300 8l-6.800 6.800" />
          </svg>
          <svg width="18" height="16" viewBox="0 0 18 16" fill="none" stroke="#d8d8d8" strokeWidth="2">
            <path d="M15.800 9A6.600 6.600 0 1114.200 3.700L16 5.600" />
            <path d="M16.500.3v5.800h-5.800" />
          </svg>
        </NavIcons>
        <Omnibox>
          <Chip>
            <svg width="18" height="16" viewBox="0 0 18 16" fill="none" stroke="#fff" strokeWidth="1.600">
              <path d="M9 1.600L16.600 14.700H1.400z" />
              <path d="M9 6.300v4.200M9 11.500v1.700" />
            </svg>
            <span>Not secure</span>
          </Chip>
          <Url>13.203.196.148:9000/project/activity?id=org.scopeindia%3A01-maven-web-app&amp;graph=issues</Url>
          <svg width="20" height="20" viewBox="0 0 20 20" fill="none" stroke="#c8cbce" strokeWidth="1.700">
            <path d="M10 2l2.300 5.500 5.900.5-4.500 3.900 1.400 5.800L10 14.600l-5.100 3.100 1.400-5.800L1.800 8l5.900-.5z" />
          </svg>
        </Omnibox>
        <Tools>
          <svg width="21" height="21" viewBox="0 0 21 21">
            <circle cx="10.500" cy="10.500" r="10.500" fill="#3571b8" />
            <path d="M1 6l6 1.500c2-2 5-2 7 0L20 6l-1 3.500-4.500 2c0 3-2 6-4 6s-4-3-4-6l-4.500-2z" fill="#f0803c" />
            <circle cx="10.500" cy="11" r="3.300" fill="#fff" />
          </svg>
          <Puzzle>
            <svg width="22" height="22" viewBox="0 0 22 22" fill="none" stroke="#d0d0d0" strokeWidth="2">
              <path d="M3.400 4H8a2.400 2.400 0 014.800 0h5.600v5.600a2.400 2.400 0 010 4.800V20H3.400v-4.800c3.600-.3 3.600-5.700 0-6z" />
            </svg>
          </Puzzle>
          <ToolLine />
          <svg width="20" height="20" viewBox="0 0 20 20" fill="none" stroke="#d0d0d0" strokeWidth="2.200">
            <path d="M10 0v12.500M4.500 7.500L10 13l5.500-5.500M1.100 14v4.800h17.800V14" />
          </svg>
          <Ring>
            <Leaf size={26} />
          </Ring>
          <svg width="4" height="18" viewBox="0 0 4 18" fill="#d8d8d8">
            <circle cx="2" cy="2" r="1.900" />
            <circle cx="2" cy="9" r="1.900" />
            <circle cx="2" cy="16" r="1.900" />
          </svg>
        </Tools>
      </Toolbar>

      <BookmarkBar>
        <svg width="18" height="18" viewBox="0 0 18 18" fill="none" stroke="#c6c3c4" strokeWidth="2">
          <path d="M1 1h5.500v5.500H1zM11.500 1H17v5.500h-5.500zM1 11.500h5.500V17H1zM11.500 11.500H17V17h-5.500z" />
        </svg>
        <BarLine $l={19} $r={17} />
        <GptRound $r={4}>
          <SiOpenai />
        </GptRound>
        <BmText>Shorts: Ancient Chin...</BmText>
        <Spacer />
        <BarLine $l={0} $r={19} />
        <svg width="21" height="16" viewBox="0 0 21 16" fill="none" stroke="#a9acae" strokeWidth="1.700">
          <path d="M1 2a1 1 0 011-1h5.500l2.300 2.500H19a1 1 0 011 1V14a1 1 0 01-1 1H2a1 1 0 01-1-1z" />
        </svg>
        <BmText>All Bookmarks</BmText>
      </BookmarkBar>

      <PageRow>
        <Page>
          <SonarNav>
            <LogoBox>
              <SonarLogo />
            </LogoBox>
            <NavLinks>
              <span>Projects</span>
              <span>Issues</span>
              <span>Rules</span>
              <span>Quality Profiles</span>
              <span>Quality Gates</span>
              <span>Administration</span>
            </NavLinks>
            <Spacer />
            <HelpDot $s={18} $bg="#fff" $fg="#262626">
              ?
            </HelpDot>
            <SearchBox>
              <svg width="16" height="16" viewBox="0 0 16 16" fill="none" stroke="#444">
                <circle cx="6.700" cy="6.700" r="5.300" strokeWidth="2.200" />
                <path d="M10.500 10.500l4.300 4.300" strokeWidth="2.600" />
              </svg>
              Search for projects...
            </SearchBox>
            <Avatar>A</Avatar>
          </SonarNav>

          <ProjectHead>
            <TitleRow>
              <svg width="20" height="18" viewBox="0 0 20 18" fill="none" stroke="#444" strokeWidth="1.300">
                <path d="M1.500 7h17v9.500h-17zM2.500 4.200h15M3.800 1.500h12.400M2.300 4.200L1.500 7M17.700 4.200l.8 2.800" />
              </svg>
              <ProjectName>01-maven-web-app</ProjectName>
              <svg width="21" height="20" viewBox="0 0 21 20" fill="none" stroke="#777" strokeWidth="1.600">
                <path d="M10.500 1.500l2.700 5.800 6.300.7-4.700 4.300 1.300 6.300-5.600-3.200-5.600 3.200 1.300-6.300L1.500 8l6.300-.7z" />
              </svg>
              <Branch>
                <svg width="38" height="22" viewBox="0 0 38 22" fill="none" stroke="#0271b9" strokeWidth="1.400">
                  <circle cx="13.500" cy="3.500" r="2" />
                  <circle cx="13.500" cy="18.500" r="2" />
                  <circle cx="20" cy="8.500" r="2" />
                  <path d="M13.500 5.500v11M20 10.500c0 3-6 1.500-6.500 5" />
                </svg>
              </Branch>
              <span>main</span>
              <svg width="34" height="16" viewBox="0 0 34 16">
                <circle cx="17" cy="8" r="6.800" fill="#0271b9" />
                <path d="M17 4.200v7.600M13.200 8h7.600" stroke="#fff" strokeWidth="1.900" />
              </svg>
              <Meta>
                <span>February 24, 2025 at 9:12 PM</span>
                <span>Version 3.0-RELEASE</span>
                <svg width="20" height="20" viewBox="0 0 20 20" fill="none" stroke="#666" strokeWidth="1.500">
                  <path d="M.8 10.500L10 1.500l9.200 9M3.300 8.500v10h4.200v-5.200a1.500 1.500 0 011.500-1.500h2a1.500 1.500 0 011.500 1.500v5.200h4.200v-10" />
                </svg>
              </Meta>
            </TitleRow>
            <TabsRow>
              <PageTab>Overview</PageTab>
              <PageTab>Issues</PageTab>
              <PageTab>Security Hotspots</PageTab>
              <PageTab>Measures</PageTab>
              <PageTab>Code</PageTab>
              <PageTab $active>Activity</PageTab>
              <TabActions>
                <span>Project Settings&nbsp;</span>
                <Caret color="#333" />
                <InfoLink>
                  <svg width="18" height="15" viewBox="0 0 18 15" stroke="#236a97" strokeWidth="2.500">
                    <path d="M0 1.600h2.500M4 1.600h14M0 5.600h2.500M4 5.600h14M0 9.600h2.500M4 9.600h14M0 13.600h2.500M4 13.600h14" />
                  </svg>
                  Project Information
                </InfoLink>
              </TabActions>
            </TabsRow>
          </ProjectHead>

          <Filters>
            <FilterStub $w={187} $gap={20} />
            <FilterStub $w={163} $gap={22} />
            <FilterStub $w={163} $gap={10} />
            <FilterStub $w={106} $gap={0} $off />
          </Filters>

          <Columns>
            <Panel $w={502}>
              <VersionBadge>3.0-RELEASE</VersionBadge>
              <List>
                <DayTitle>February 24, 2025</DayTitle>
                <Analysis $h={112}>
                  <TimeRow>
                    <span>9:12 PM</span>
                    <Gear />
                  </TimeRow>
                  <VersionRow>
                    Version: <b>3.0-RELEASE</b>
                    <Pencil />
                  </VersionRow>
                </Analysis>
                {times.map((t) => (
                  <Analysis key={t} $plain={t === "5:04 PM"}>
                    <TimeRow>
                      <span>{t}</span>
                      <Gear />
                    </TimeRow>
                  </Analysis>
                ))}
                <PeriodMark>
                  <PeriodArrow />
                  <PeriodLine />
                  <PeriodLabel>
                    New Code Period starts here
                    <HelpDot $s={13} $bg="#8a8a8a" $fg="#fbf3d5">
                      ?
                    </HelpDot>
                  </PeriodLabel>
                </PeriodMark>
                <Analysis>
                  <TimeRow>
                    <span>3:12 PM</span>
                    <Gear />
                  </TimeRow>
                </Analysis>
              </List>
            </Panel>

            <Panel $w={1073}>
              <GraphHead>
                <GraphLabel>Choose graph type</GraphLabel>
                <GraphSelect>
                  <span>Issues</span>
                  <Caret color="#555" />
                </GraphSelect>
              </GraphHead>
              <Legend>
                <LegendItem>
                  <SeriesLine kind="bugs" />
                  Bugs
                </LegendItem>
                <LegendItem>
                  <SeriesLine kind="smells" />
                  Code Smells
                </LegendItem>
                <LegendItem>
                  <SeriesLine kind="vulns" />
                  Vulnerabilities
                </LegendItem>
              </Legend>
              <Chart />
              <Tip>
                <TipTitle>February 24, 2025 at 5:04 PM</TipTitle>
                <TipRow>
                  <SeriesLine kind="bugs" />
                  <b>8</b>
                  <Rating $c="#f4d348">C</Rating>
                  <TipName>Bugs</TipName>
                </TipRow>
                <TipRow>
                  <SeriesLine kind="smells" />
                  <b>0</b>
                  <Rating $c="#6cd46c">A</Rating>
                  <TipName>Code Smells</TipName>
                </TipRow>
                <TipRow>
                  <SeriesLine kind="vulns" />
                  <b>0</b>
                  <Rating $c="#6cd46c">A</Rating>
                  <TipName>Vulnerabilities</TipName>
                </TipRow>
              </Tip>
            </Panel>
          </Columns>
        </Page>
        <Scroll>
          <svg width="9" height="5" viewBox="0 0 9 5">
            <path d="M4.500 0L9 5H0z" fill="#505050" />
          </svg>
          <Thumb />
          <svg width="9" height="5" viewBox="0 0 9 5">
            <path d="M4.500 5L9 0H0z" fill="#505050" />
          </svg>
        </Scroll>
      </PageRow>

      <Taskbar>
        <Weather>
          <WeatherIcon>
            <svg width="30" height="36" viewBox="0 0 30 36">
              <path d="M1 20h28c0 8-6 14-14 14S1 28 1 20z" fill="#f39a1c" />
              <path d="M6 14h6M5 19h14M0 24.500h14M19 24.500h5M2 29.500h22" stroke="#777" strokeWidth="2.800" strokeLinecap="round" />
            </svg>
            <Count $c="#fc97a4" $l={14} $t={-2}>
              5
            </Count>
          </WeatherIcon>
          <div>
            <div>83°F</div>
            <WeatherSub>Haze</WeatherSub>
          </div>
        </Weather>
        <svg width="29" height="29" viewBox="0 0 29 29">
          <defs>
            <linearGradient id="win" x1="0" y1="0" x2="1" y2="1">
              <stop offset="0" stopColor="#8be3fb" />
              <stop offset="1" stopColor="#1193f5" />
            </linearGradient>
          </defs>
          <path d="M0 0h14v14H0zM15 0h14v14H15zM0 15h14v14H0zM15 15h14v14H15z" fill="url(#win)" />
        </svg>
        <Pill>
          <svg width="19" height="19" viewBox="0 0 19 19" fill="none" stroke="#e6e6e6" strokeWidth="2">
            <circle cx="8" cy="8" r="6.800" />
            <path d="M13 13l5 5" strokeWidth="2.400" />
          </svg>
          Search
          <Spacer />
          <Mask />
        </Pill>
        <AppSlot>{Icons.task}</AppSlot>
        <AppSlot>
          {Icons.folder}
          <Running />
        </AppSlot>
        <AppSlot>{Icons.copilot}</AppSlot>
        <AppSlot>
          <HpBox>
            my<i>hp</i>
          </HpBox>
        </AppSlot>
        <AppSlot>{Icons.edge}</AppSlot>
        <AppSlot>
          <HelpBig>?</HelpBig>
          <Count $c="#ffc20e" $l={28} $t={8} />
        </AppSlot>
        <AppSlot>
          <Round $bg="#2aa1dc" $s={27} $r="50%" $f={16}>
            <FaTelegramPlane />
          </Round>
        </AppSlot>
        <AppSlot>{Icons.brave}</AppSlot>
        <AppSlot>
          <WaWrap>
            <FaWhatsapp />
          </WaWrap>
          <Count $c="#dc9de6" $l={28} $t={8}>
            7
          </Count>
          <Running />
        </AppSlot>
        <AppSlot>
          <Round
            $bg="radial-gradient(circle at 25% 105%, #fed373 0 8%, #f15245 40%, #d92e7f 62%, #7a3fd0 95%)"
            $s={30}
            $r="7px"
            $f={25}
          >
            <FaInstagram />
          </Round>
        </AppSlot>
        <AppSlot>{Icons.vmware}</AppSlot>
        <AppSlot $on>
          {Icons.chrome}
          <BadgeLeaf>
            <Leaf size={20} />
          </BadgeLeaf>
          <Running $wide />
        </AppSlot>
        <AppSlot>
          {Icons.git}
          <Running />
        </AppSlot>
        <AppSlot>
          {Icons.terminal}
          <Running />
        </AppSlot>
        <AppSlot>
          {Icons.notepad}
          <Running />
        </AppSlot>
        <Tray>
          <svg width="14" height="9" viewBox="0 0 14 9">
            <path d="M1 7.800l6-6 6 6" fill="none" stroke="#fff" strokeWidth="2" />
          </svg>
          <svg width="43" height="20" viewBox="0 0 43 20">
            <path d="M27 13a4.500 4.500 0 010-8 6 6 0 0111-1c3 .5 4.500 3 4 6l-7 5h-6z" fill="#8f8f8f" />
            <path d="M27 14.500a4.300 4.300 0 01.5-8.500 5 5 0 018 2l-1 7z" fill="#dedede" />
            <circle cx="37" cy="14" r="5.600" fill="#fff" />
            <path d="M33.800 13.500a3.300 3.300 0 016-1.300M40.200 14.500a3.300 3.300 0 01-6 1.300" fill="none" stroke="#1477d4" strokeWidth="1.500" />
          </svg>
          <Lang>
            ENG
            <br />
            IN
          </Lang>
          <TrayIcons>
            <svg width="21" height="18" viewBox="0 0 21 18" fill="none" stroke="#fff" strokeWidth="1.700">
              <path d="M1 7a13.500 13.500 0 0119 0M4 10.200a9.200 9.200 0 0113 0M7 13.200a5 5 0 017 0" />
              <circle cx="10.500" cy="15.800" r="1.200" fill="#fff" />
            </svg>
            <svg width="21" height="18" viewBox="0 0 21 18" fill="none" stroke="#fff" strokeWidth="1.400">
              <path d="M1 6.500h3.500L9 2.500v13L4.500 11.500H1zM11.500 6.500a4 4 0 010 5M14 4a7.500 7.500 0 010 10M16.500 1.800a11 11 0 010 14.400" />
            </svg>
            <svg width="21" height="18" viewBox="0 0 21 18" fill="none" stroke="#fff" strokeWidth="1.500">
              <path d="M11 4h6a1.500 1.500 0 011.500 1.500v8A1.500 1.500 0 0117 15H7M19 8h1.500v3.500H19" />
              <path d="M2 13C-.5 8 2 3.500 7 1c3 5 3.500 10-1 12.500-1.500.8-3 .5-4-.5zM1 17l5-9" fill="#fff" stroke="#1c1c1c" strokeWidth=".8" />
              <path d="M0 16.500h3.500" strokeWidth="2" />
            </svg>
          </TrayIcons>
          <Clock>
            21:50
            <br />
            24-02-2025
          </Clock>
        </Tray>
      </Taskbar>
    </Screen>
  );
}
